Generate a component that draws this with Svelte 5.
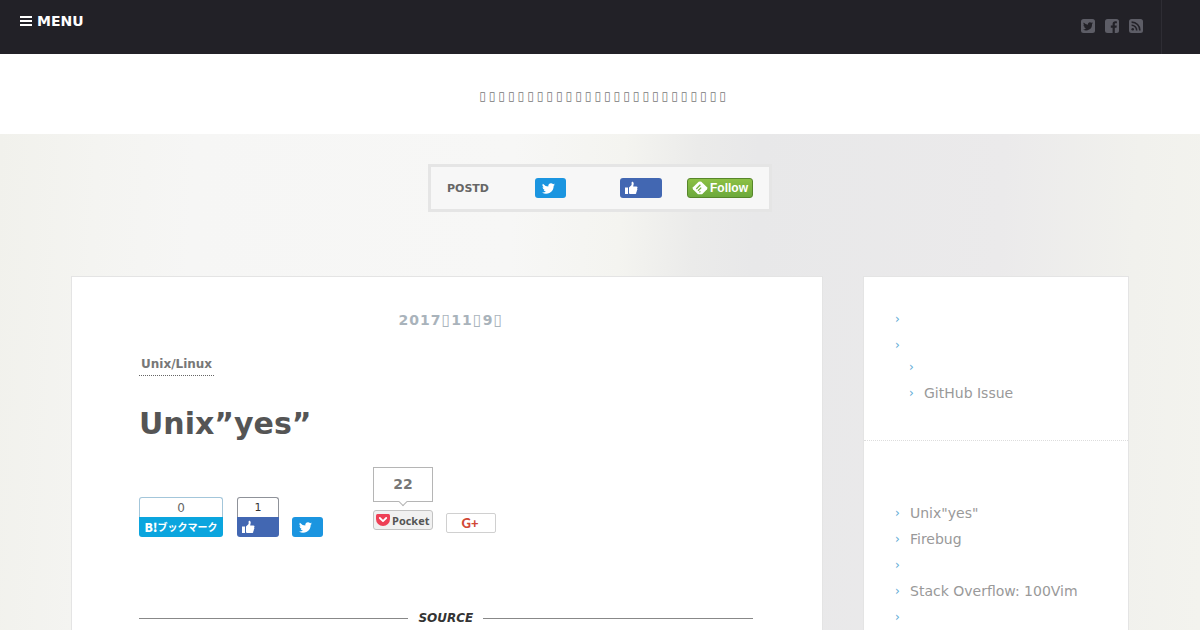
<script lang="ts">
  type NavItem = { label: string; nested?: boolean; empty?: boolean };

  const tagline = '▯'.repeat(26);

  const categories: NavItem[] = [
    { label: '' },
    { label: '' },
    { label: '', nested: true, empty: true },
    { label: 'GitHub Issue', nested: true }
  ];

  const recent: NavItem[] = [
    { label: 'Unix"yes"' },
    { label: 'Firebug' },
    { label: '' },
    { label: 'Stack Overflow: 100Vim' },
    { label: '' }
  ];
</script>

{#snippet bird()}
  <svg class="bird" viewBox="0 0 24 24" aria-hidden="true">
    <path d="M24 4.6a10 10 0 0 1-2.8.8 5 5 0 0 0 2.1-2.7 10 10 0 0 1-3.1 1.2 4.9 4.9 0 0 0-8.4 4.5A14 14 0 0 1 1.7 3.1a4.9 4.9 0 0 0 1.5 6.6 4.9 4.9 0 0 1-2.2-.6v.1a4.9 4.9 0 0 0 3.9 4.8 5 5 0 0 1-2.2.1 4.9 4.9 0 0 0 4.6 3.4A9.9 9.9 0 0 1 0 19.5a14 14 0 0 0 21.5-12.4A10 10 0 0 0 24 4.6z" />
  </svg>
{/snippet}

{#snippet thumb()}
  <svg class="thumb" viewBox="0 0 14 14" aria-hidden="true">
    <path d="M1 6.5h3V13H1zM5 6.5 7.6 4V1.4C7.6.4 9.7.6 9.7 2.6c0 1-.4 2.3-.5 2.9h3.1c1.5 0 1.5 1.6.7 2 .7.6.4 1.5-.2 1.8.4.6.1 1.4-.5 1.6.3.9-.2 2.1-1.5 2.1H7.2c-1 0-1.4-.4-2.2-.6z" />
  </svg>
{/snippet}

{#snippet navList(items: NavItem[])}
  <ul class="nav-list">
    {#each items as item}
      <li class:nested={item.nested} class:empty={item.empty}>
        <span class="chevron">›</span>
        <a href="#top">{item.label}</a>
      </li>
    {/each}
  </ul>
{/snippet}

<header class="topbar">
  <button class="menu" type="button">
    <svg viewBox="0 0 12 10" aria-hidden="true">
      <path d="M0 0h12v2H0zM0 4h12v2H0zM0 8h12v2H0z" />
    </svg>
    MENU
  </button>
  <div class="socials">
    <a href="#twitter" aria-label="Twitter">
      <svg viewBox="0 0 14 14">
        <rect width="14" height="14" rx="2.5" />
        <path class="cut" d="M12 4.1a4 4 0 0 1-1.2.3 2 2 0 0 0 .9-1.1 4 4 0 0 1-1.3.5 2.1 2.1 0 0 0-3.5 1.9 5.8 5.8 0 0 1-4.2-2.2 2.1 2.1 0 0 0 .6 2.8 2 2 0 0 1-.9-.3c0 1 .7 1.9 1.6 2.1a2 2 0 0 1-.9 0 2.1 2.1 0 0 0 1.9 1.4A4.1 4.1 0 0 1 2 10.4a5.8 5.8 0 0 0 9-5.2 4 4 0 0 0 1-1.1z" />
      </svg>
    </a>
    <a href="#facebook" aria-label="Facebook">
      <svg viewBox="0 0 14 14">
        <rect width="14" height="14" rx="2.5" />
        <path class="cut" d="M7.6 14V8.7H5.8V6.6h1.8V5.1c0-1.8 1.1-2.8 2.7-2.8.8 0 1.4.1 1.6.1v1.9h-1.1c-.9 0-1 .4-1 1v1.3h2l-.3 2.1H9.8V14z" />
      </svg>
    </a>
    <a href="#rss" aria-label="RSS">
      <svg viewBox="0 0 14 14">
        <rect width="14" height="14" rx="2.5" />
        <circle class="cut" cx="3.7" cy="10.3" r="1.3" />
        <path class="arc" d="M2.6 6.3a5 5 0 0 1 5.1 5.1M2.6 3.1a8.2 8.2 0 0 1 8.3 8.3" />
      </svg>
    </a>
  </div>
</header>

<div class="tagline">{tagline}</div>

<div class="page">
  <div class="follow-box">
    <span class="follow-name">POSTD</span>
    <button class="btn twitter" type="button" aria-label="Tweet">{@render bird()}</button>
    <button class="btn facebook" type="button" aria-label="Like">{@render thumb()}</button>
    <button class="btn feedly" type="button">
      <svg viewBox="0 0 16 14" aria-hidden="true">
        <path class="leaf" d="M6.7.8Q8 0 9.3.8L15 6.3q.8 1 0 1.9l-4.4 4.6q-.5.5-1.2.5H6.6q-.7 0-1.2-.5L1 8.2q-.8-1 0-1.9z" />
        <path class="vein" d="M4.3 8 8.4 3.7M6 9.8l3.2-3.2M7.4 11.4l1-1" />
      </svg>
      Follow
    </button>
  </div>

  <div class="columns">
    <main class="article">
      <time class="date" datetime="2017-11-09">2017<span>▯</span>11<span>▯</span>9<span>▯</span></time>
      <a class="category" href="#unix">Unix/Linux</a>
      <h1>Unix”yes”</h1>

      <div class="shares">
        <div class="share hatena">
          <span class="count">0</span>
          <button class="btn" type="button"><b>B!</b>ブックマーク</button>
        </div>
        <div class="share fb">
          <span class="count">1</span>
          <button class="btn facebook" type="button" aria-label="Like">{@render thumb()}</button>
        </div>
        <button class="btn twitter" type="button" aria-label="Tweet">{@render bird()}</button>
        <div class="pocket">
          <span class="bubble">22</span>
          <button type="button">
            <svg viewBox="0 0 14 12" aria-hidden="true">
              <path class="pouch" d="M1.5 0h11Q14 0 14 1.5V5A7 7 0 0 1 0 5V1.5Q0 0 1.5 0z" />
              <path class="check" d="M3.8 4 7 7.1 10.2 4" />
            </svg>
            Pocket
          </button>
        </div>
        <button class="gplus" type="button">G+</button>
      </div>

      <div class="source"><span>SOURCE</span></div>
    </main>

    <aside class="sidebar">
      <nav class="widget" aria-label="Categories">{@render navList(categories)}</nav>
      <nav class="widget recent" aria-label="Recent">{@render navList(recent)}</nav>
    </aside>
  </div>
</div>

<style>
  :global(body) {
    font-family: 'DejaVu Sans', sans-serif;
    font-size: 14px;
    color: #555;
    background: #fff;
  }

  :global(html) {
    overflow: hidden;
  }

  button {
    font-family: inherit;
    border: none;
    padding: 0;
    cursor: pointer;
  }

  a {
    color: inherit;
    text-decoration: none;
  }

  .topbar {
    display: flex;
    justify-content: space-between;
    height: 54px;
    background: #222127;
  }

  .menu {
    display: flex;
    align-items: center;
    gap: 5px;
    height: 42px;
    padding-left: 20px;
    background: none;
    color: #fff;
    font-size: 14px;
    font-weight: bold;
  }

  .menu svg {
    width: 12px;
    height: 10px;
    fill: #fff;
  }

  .socials {
    display: flex;
    align-items: center;
    gap: 10px;
    margin-right: 38px;
    padding: 0 18px 2px 0;
    border-right: 1px solid #2e2d34;
  }

  .socials svg {
    display: block;
    width: 14px;
    height: 14px;
    fill: #5d5d66;
  }

  .socials .cut {
    fill: #222127;
  }

  .socials .arc {
    fill: none;
    stroke: #222127;
    stroke-width: 1.6;
  }

  .tagline {
    height: 80px;
    line-height: 84px;
    padding-left: 8px;
    text-align: center;
    font-size: 12px;
    letter-spacing: 3px;
    color: #777;
  }

  .page {
    padding: 30px 6% 0;
    background: linear-gradient(93deg, #f1f1ec 0%, #f4f4f1 8%, #f6f6f5 16%, #f7f7f6 42%, #f4f4f0 51%, #ebebea 57%, #e8e8e9 62%, #ebeaeb 82%, #f1f1ed 93%, #f3f3ee 100%);
  }

  .follow-box {
    display: flex;
    align-items: center;
    box-sizing: border-box;
    width: 344px;
    height: 48px;
    margin: 0 auto 65px;
    padding: 0 16px;
    border: 3px solid #e5e5e5;
    background: #f7f7f7;
  }

  .follow-name {
    width: 88px;
    font-size: 11px;
    font-weight: bold;
    color: #666;
  }

  .btn {
    display: flex;
    align-items: center;
    height: 20px;
    border-radius: 3px;
    color: #fff;
  }

  .twitter {
    width: 31px;
    padding-left: 7px;
    background: #1b95e0;
  }

  .facebook {
    width: 42px;
    padding-left: 4px;
    background: #4267b2;
  }

  .bird {
    width: 13px;
    height: 13px;
    fill: #fff;
  }

  .thumb {
    width: 14px;
    height: 14px;
    fill: #fff;
  }

  .follow-box .facebook {
    margin: 0 25px 0 54px;
  }

  .feedly {
    box-sizing: border-box;
    width: 66px;
    gap: 2px;
    padding-left: 4px;
    border: 1px solid #57862b;
    background: linear-gradient(#8cc044, #6ca93c);
    font-family: 'Liberation Sans', sans-serif;
    font-size: 12px;
    font-weight: bold;
  }

  .feedly svg {
    width: 16px;
    height: 14px;
    flex: none;
  }

  .leaf {
    fill: #fff;
  }

  .vein {
    fill: none;
    stroke: #78b040;
    stroke-width: 1.3;
  }

  .columns {
    display: flex;
    justify-content: space-between;
  }

  .article,
  .sidebar {
    box-sizing: border-box;
    background: #fff;
    box-shadow: 0 0 0 1px #e4e4e4;
  }

  .article {
    display: flex;
    flex-direction: column;
    width: 71%;
    padding: 31px 69px 0 67px;
  }

  .date {
    align-self: center;
    line-height: 24px;
    padding-left: 10px;
    font-weight: bold;
    letter-spacing: 1px;
    color: #a9b3bb;
  }

  .date span {
    font-size: 16px;
    font-weight: normal;
  }

  .category {
    align-self: flex-start;
    margin-top: 21px;
    padding: 0 2px;
    border-bottom: 1px dotted #666;
    font-size: 12px;
    font-weight: bold;
    line-height: 22px;
    color: #777;
  }

  h1 {
    margin: 27px 0 22px;
    font-size: 30px;
    line-height: 42px;
    color: #555;
  }

  .shares {
    display: flex;
    align-items: flex-end;
  }

  .share {
    margin-right: 14px;
  }

  .share .btn {
    border-radius: 0 0 3px 3px;
  }

  .count {
    display: block;
    box-sizing: border-box;
    height: 20px;
    border: 1px solid #8f9299;
    border-bottom: none;
    border-radius: 3px 3px 0 0;
    line-height: 20px;
    text-align: center;
    font-size: 11px;
    color: #333;
  }

  .hatena .count {
    border-color: #a3c6da;
    font-size: 12px;
    color: #666;
  }

  .hatena .btn {
    width: 84px;
    justify-content: center;
    padding-bottom: 2px;
    background: #0ba5de;
    font-family: 'Noto Sans CJK JP', sans-serif;
    font-size: 10px;
    font-weight: bold;
    white-space: nowrap;
  }

  .hatena b {
    font-size: 12px;
  }

  .fb {
    margin-right: 13px;
  }

  .pocket {
    display: flex;
    flex-direction: column;
    width: 60px;
    margin: 0 13px 7px 50px;
    gap: 8px;
  }

  .bubble {
    position: relative;
    border: 1px solid #b5b5b5;
    line-height: 33px;
    text-align: center;
    font-weight: bold;
    color: #777;
  }

  .bubble::after {
    content: '';
    position: absolute;
    left: 26px;
    bottom: -4px;
    width: 5px;
    height: 5px;
    border: solid #b5b5b5;
    border-width: 0 1px 1px 0;
    background: #fff;
    transform: rotate(45deg);
  }

  .pocket button {
    display: flex;
    align-items: center;
    gap: 2px;
    height: 20px;
    padding-left: 2px;
    border: 1px solid #c2c2c2;
    border-radius: 3px;
    background: #f1f1f1;
    font-family: 'Open Sans', sans-serif;
    font-size: 11px;
    font-weight: bold;
    color: #555;
  }

  .pocket svg {
    width: 14px;
    height: 12px;
    flex: none;
  }

  .pouch {
    fill: #ee4056;
  }

  .check {
    fill: none;
    stroke: #fff;
    stroke-width: 1.8;
    stroke-linecap: round;
    stroke-linejoin: round;
  }

  .gplus {
    width: 50px;
    height: 20px;
    margin-bottom: 4px;
    padding-right: 2px;
    border: 1px solid #d0d0d0;
    border-radius: 2px;
    background: #fff;
    font-family: Lato, sans-serif;
    font-size: 13px;
    font-weight: 900;
    color: #d14836;
  }

  .source {
    display: flex;
    align-items: center;
    gap: 10px;
    margin-top: 72px;
    line-height: 18px;
    font-size: 12px;
    font-weight: bold;
    font-style: italic;
    color: #333;
  }

  .source::before,
  .source::after {
    content: '';
    flex: 1;
    height: 1px;
    background: #888;
  }

  .sidebar {
    width: 25%;
  }

  .widget {
    padding: 29px 31px 34px;
    border-bottom: 1px dotted #ddd;
  }

  .recent {
    padding: 59px 31px 0;
    border-bottom: none;
  }

  .nav-list {
    list-style: none;
    margin: 0;
    padding: 0;
  }

  .nav-list li {
    display: flex;
    height: 26px;
    line-height: 26px;
    color: #999;
  }

  .nav-list .nested {
    padding-left: 14px;
  }

  .nav-list .empty {
    height: 22px;
    line-height: 18px;
  }

  .chevron {
    width: 15px;
    font-size: 12px;
    color: #5ea9d6;
  }
</style>
